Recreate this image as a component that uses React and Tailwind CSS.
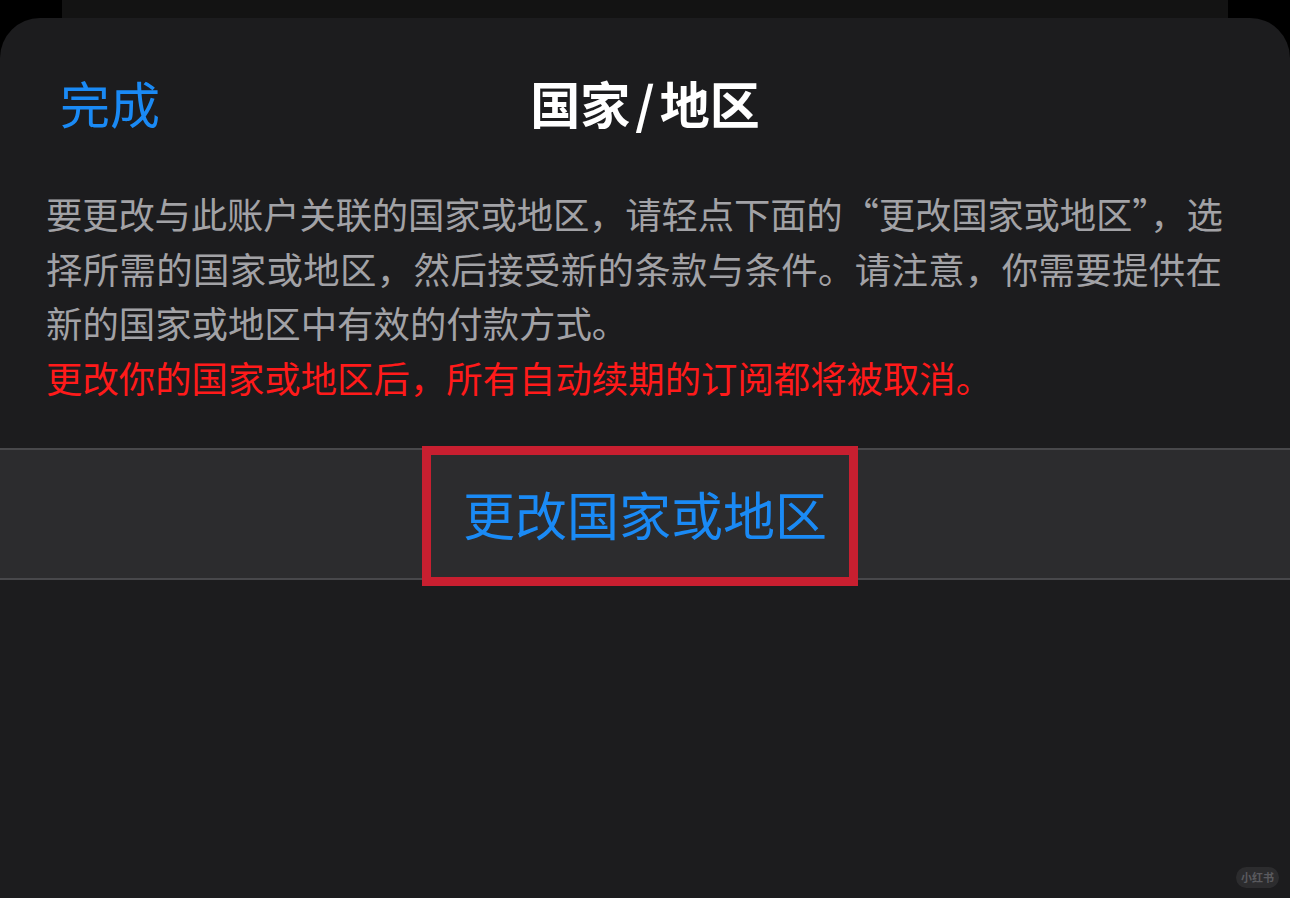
const cjk = { fontFamily: '"Noto Sans CJK SC", "Noto Sans", sans-serif' };

function Header() {
  return (
    <div className="relative flex h-[168px] items-center justify-center">
      <button className="absolute left-[60px] text-[50px] leading-none text-[#1a8af5]">
        完成
      </button>
      <h1 className="flex items-center text-[50px] font-bold leading-none text-white">
        国家<span className="mx-[5px]">/</span>地区
      </h1>
    </div>
  );
}

function Notice() {
  return (
    <div className="pl-[46px] pr-[68px] text-[36.4px] leading-[54.7px]">
      <div className="text-[#a2a2a6] text-justify [text-align-last:justify] whitespace-nowrap tracking-[-0.8px]">
        要更改与此账户关联的国家或地区，请轻点下面的“更改国家或地区”，选
      </div>
      <div className="text-[#a2a2a6] text-justify [text-align-last:justify] whitespace-nowrap">
        择所需的国家或地区，然后接受新的条款与条件。请注意，你需要提供在
      </div>
      <div className="text-[#a2a2a6]">新的国家或地区中有效的付款方式。</div>
      <div className="text-[#ff1a1a]">更改你的国家或地区后，所有自动续期的订阅都将被取消。</div>
    </div>
  );
}

function ChangeRow() {
  return (
    <div className="relative mt-[43px] flex h-[132px] items-center justify-center border-y-2 border-[#48484b] bg-[#2c2c2e]">
      <span className="text-[52px] leading-none text-[#1a8af5]">更改国家或地区</span>
      <div className="pointer-events-none absolute left-[422px] top-[-4px] h-[140px] w-[436px] border-[9px] border-[#c81f30]" />
    </div>
  );
}

export default function App() {
  return (
    <div className="relative flex h-[898px] w-full flex-col overflow-hidden bg-black" style={cjk}>
      <div className="mx-[62px] h-[18px] shrink-0 bg-[#131313]" />
      <div className="flex flex-1 flex-col rounded-t-[40px] bg-[#1c1c1e]">
        <Header />
        <Notice />
        <ChangeRow />
      </div>
      <div className="absolute bottom-[10px] right-[11px] flex h-[21px] w-[43px] items-center justify-center rounded-full bg-[#2c2c2e] text-[11px] font-bold text-[#5a5a5e]">
        小红书
      </div>
    </div>
  );
}
